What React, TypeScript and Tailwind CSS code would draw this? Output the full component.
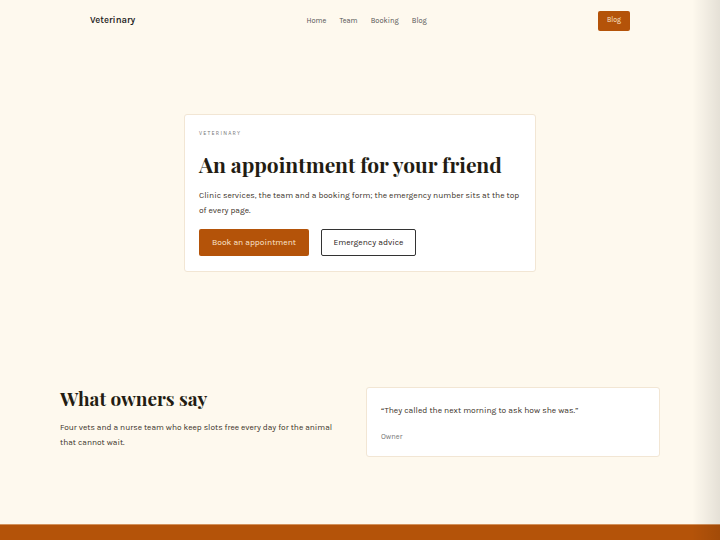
export default function App() {
  const sans = { fontFamily: "Karla, Lato, 'Open Sans', sans-serif" };
  const serif = { fontFamily: "'Playfair Display', 'Liberation Serif', serif" };

  return (
    <div className="relative min-h-screen overflow-hidden bg-[#fef9ee] text-[#2a2118]" style={sans}>
      <header className="mx-auto flex h-[41px] w-[540px] items-center justify-between">
        <a className="text-[9.5px] font-semibold text-[#222]">Veterinary</a>
        <nav className="flex items-center gap-[13px] text-[7.5px] text-[#555]">
          <a>Home</a>
          <a>Team</a>
          <a>Booking</a>
          <a>Blog</a>
        </nav>
        <a className="flex h-5 w-8 items-center justify-center rounded-[2px] bg-[#b45309] text-[7px] text-[#fde8d0]">
          Blog
        </a>
      </header>

      <section className="flex justify-center pt-[73px] pb-[115px]">
        <div className="w-[352px] rounded-[3px] border border-[#f2e6d4] bg-white px-[14px] pt-[16px] pb-[15px]">
          <p className="text-[5.5px] leading-none tracking-[0.22em] text-[#777]">VETERINARY</p>
          <h1 className="mt-[13px] text-[21px] leading-[28px] font-bold text-[#231c12]" style={serif}>
            An appointment for your friend
          </h1>
          <p className="mt-[10px] text-[8.45px] leading-[15px] text-[#3a3128]">
            Clinic services, the team and a booking form; the emergency number sits at the top of every page.
          </p>
          <div className="mt-[11px] flex gap-3">
            <a className="flex h-[27px] w-[110px] items-center justify-center rounded-[2px] bg-[#b45309] text-[8.5px] text-[#fde8d0]">
              Book an appointment
            </a>
            <a className="flex h-[27px] w-[95px] items-center justify-center rounded-[2px] border border-[#333] bg-white text-[8.5px] text-[#2a2118]">
              Emergency advice
            </a>
          </div>
        </div>
      </section>

      <section className="mx-auto grid w-[600px] grid-cols-[282px_294px] gap-[24px] pb-[67px]">
        <div>
          <h2 className="text-[19px] leading-[22px] font-bold text-[#231c12]" style={serif}>
            What owners say
          </h2>
          <p className="mt-[11px] text-[8.4px] leading-[15px] text-[#3a3128]">
            Four vets and a nurse team who keep slots free every day for the animal that cannot wait.
          </p>
        </div>
        <div className="h-[70px] rounded-[3px] border border-[#f2e6d4] bg-white px-[14px] pt-[16px]">
          <p className="text-[8.5px] leading-[12px] text-[#3a3128]">
            “They called the next morning to ask how she was.”
          </p>
          <p className="mt-[15px] text-[7.5px] text-[#777]">Owner</p>
        </div>
      </section>

      <footer className="h-10 border-t border-[#d3925c] bg-[#b45309]" />

      <div className="pointer-events-none absolute top-0 right-0 h-full w-[28px] bg-gradient-to-r from-transparent to-black/10" />
    </div>
  );
}
